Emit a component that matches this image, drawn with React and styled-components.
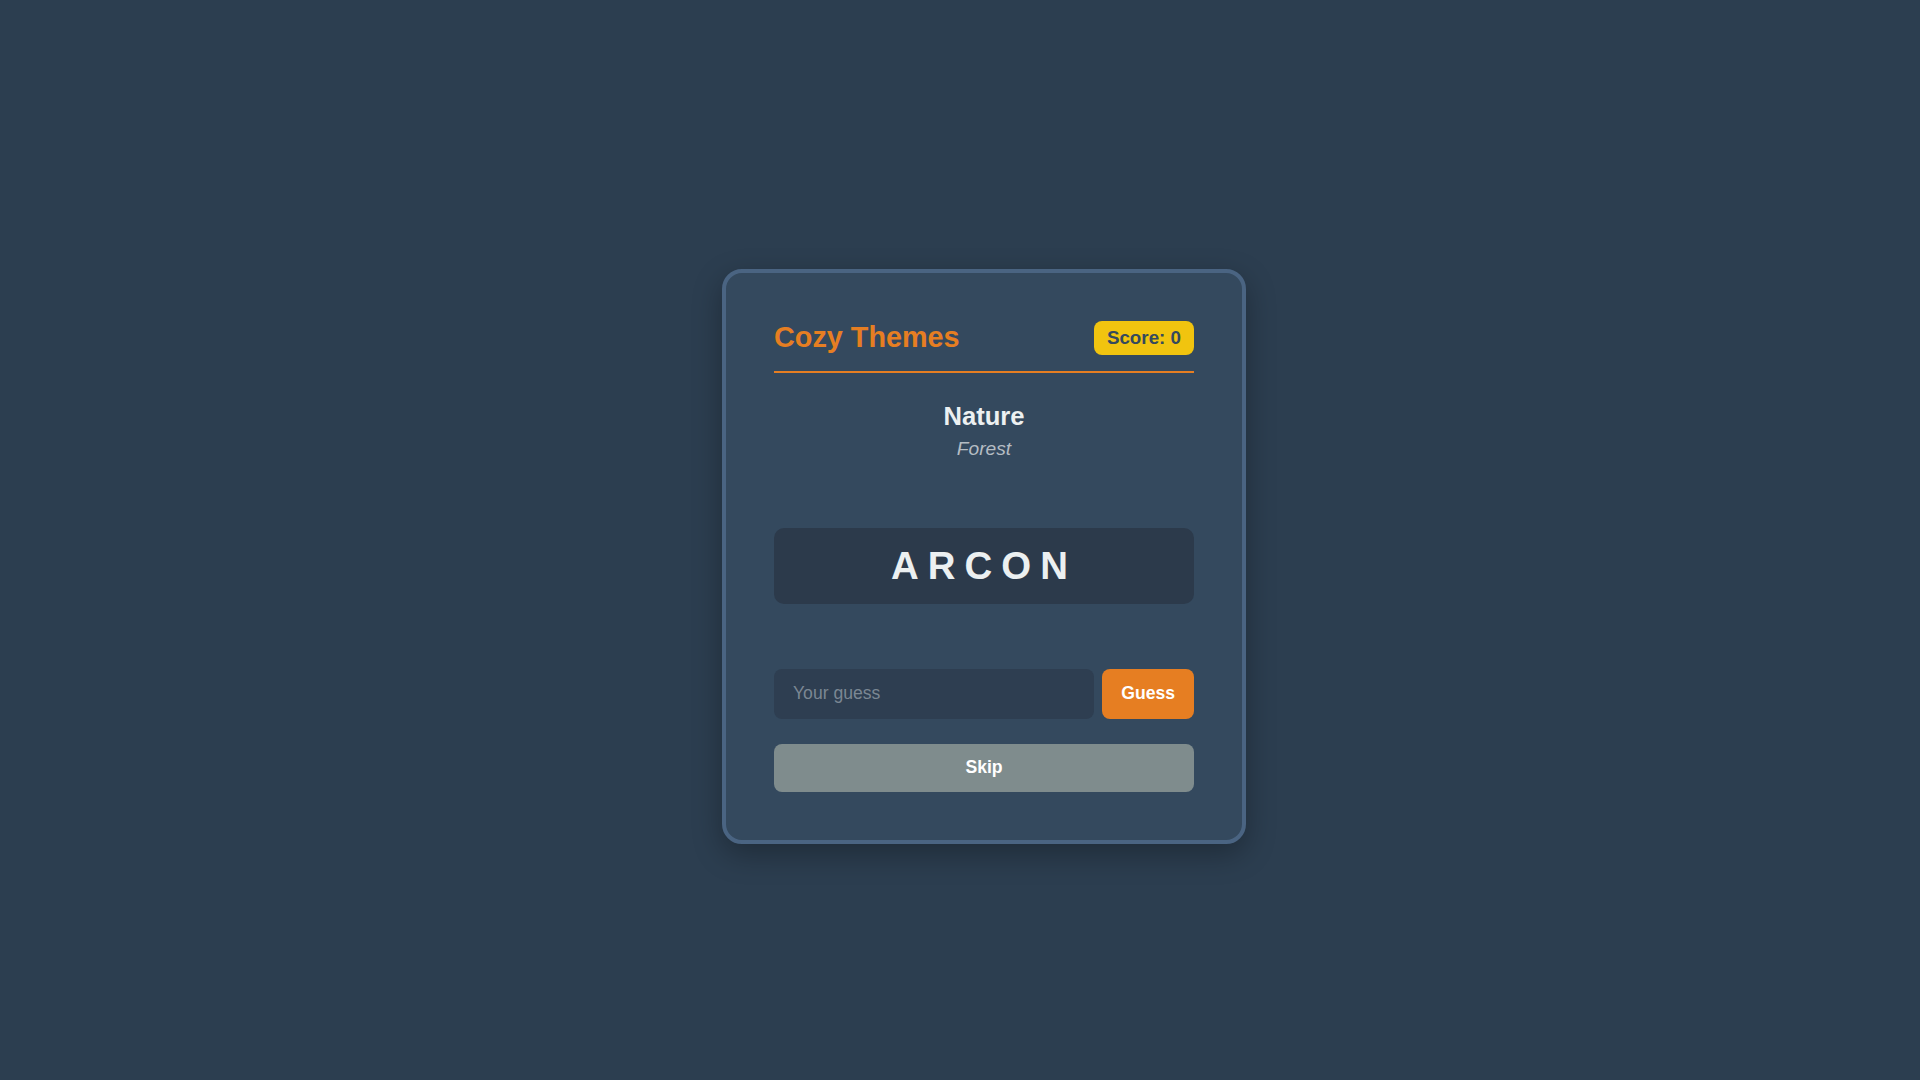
import React from "react";
import styled, { createGlobalStyle } from "styled-components";

const Global = createGlobalStyle`
  html {
    margin: 0;
    padding: 0;
    overflow-y: scroll;
    background: #2c3e50;
  }
  body {
    margin: 0;
    padding: 0;
    overflow-x: hidden;
    background: #2c3e50;
    font-family: "Liberation Sans", Arial, sans-serif;
  }
  * { box-sizing: border-box; }
`;

const Page = styled.div`
  box-sizing: content-box;
  width: 100vw;
  min-height: 100vh;
  padding: 16px 24px;
  display: flex;
  align-items: center;
  justify-content: center;
  background: #2c3e50;
`;

const Card = styled.div`
  width: 524px;
  padding: 48px;
  background: #34495e;
  border: 4px solid #4a6482;
  border-radius: 20px;
  box-shadow: 0 10px 30px rgba(0, 0, 0, 0.3);
  display: flex;
  flex-direction: column;
`;

const Header = styled.div`
  display: flex;
  align-items: center;
  justify-content: space-between;
  padding-bottom: 16px;
  border-bottom: 2px solid #e67e22;
`;

const Title = styled.h1`
  margin: 0;
  font-size: 28.8px;
  font-weight: 700;
  color: #e67e22;
`;

const Score = styled.div`
  background: #f1c40f;
  color: #34495e;
  font-weight: 700;
  font-size: 18.8px;
  padding: 6px 13px;
  border-radius: 8px;
  line-height: 22px;
`;

const Category = styled.h2`
  margin: 29px 0 0;
  text-align: center;
  font-size: 25.6px;
  font-weight: 700;
  color: #ecf0f1;
`;

const Sub = styled.div`
  margin-top: 7px;
  text-align: center;
  font-size: 19.2px;
  font-style: italic;
  color: #b4bcc3;
`;

const Word = styled.div`
  margin-top: 68px;
  background: #2c3a4b;
  border-radius: 10px;
  padding: 16px;
  text-align: center;
  font-size: 38.4px;
  font-weight: 700;
  letter-spacing: 9px;
  line-height: 44px;
  color: #ecf0f1;
`;

const Row = styled.div`
  margin-top: 65px;
  display: flex;
  gap: 8px;
`;

const Input = styled.input`
  flex: 1;
  min-width: 0;
  height: 50px;
  padding: 0 19px;
  border: none;
  border-radius: 8px;
  background: #2e3e51;
  color: #ecf0f1;
  font-family: "Liberation Sans", Arial, sans-serif;
  font-size: 17.6px;
  outline: none;
  &::placeholder { color: #7b8793; }
`;

const Button = styled.button`
  height: ${(p) => p.$h}px;
  width: ${(p) => (p.$full ? "100%" : "auto")};
  padding: 0 19px;
  border: none;
  border-radius: 8px;
  background: ${(p) => p.$bg};
  color: #ffffff;
  font-family: "Liberation Sans", Arial, sans-serif;
  font-size: 17.6px;
  font-weight: 700;
  cursor: pointer;
`;

const SkipWrap = styled.div`
  margin-top: 25px;
`;

export default function App() {
  return (
    <>
      <Global />
      <Page>
        <Card>
          <Header>
            <Title>Cozy Themes</Title>
            <Score>Score: 0</Score>
          </Header>
          <Category>Nature</Category>
          <Sub>Forest</Sub>
          <Word>ARCON</Word>
          <Row>
            <Input placeholder="Your guess" />
            <Button $bg="#e67e22" $h={50}>Guess</Button>
          </Row>
          <SkipWrap>
            <Button $bg="#7f8c8d" $h={48} $full>Skip</Button>
          </SkipWrap>
        </Card>
      </Page>
    </>
  );
}
